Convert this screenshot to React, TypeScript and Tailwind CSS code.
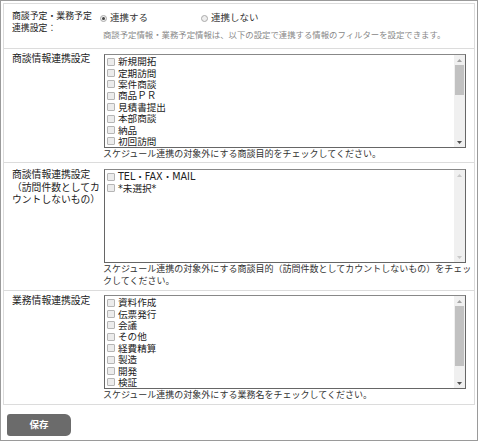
import React from 'react';

const jp = { fontFamily: '"DejaVu Sans", "Noto Sans CJK JP", sans-serif' };

interface ListBoxProps {
  items: string[];
  thumb?: { top: number; height: number };
}

const Check = () => (
  <span className="inline-block w-[8px] h-[8px] mr-[3px] rounded-[1px] border border-[#b5b5b5] bg-[#ececec] shrink-0" />
);

// multi-select checkbox list with a classic scrollbar
const ListBox: React.FC<ListBoxProps> = ({ items, thumb }) => (
  <div className="flex w-[362px] h-[94px] border border-[#666] border-t-[#888] ml-[1px] bg-white">
    <div className="flex-1 overflow-hidden pt-[1px] pl-[2px]">
      {items.map(it => (
        <div key={it} className="flex items-center h-[11.4px] text-[9.6px] text-[#222] leading-[11px] whitespace-nowrap">
          <Check />
          <span>{it}</span>
        </div>
      ))}
    </div>
    <div className="relative w-[11px] h-full bg-[#f0f0f0]">
      <div className="h-[10px] flex items-center justify-center">
        <svg width="5" height="3" viewBox="0 0 5 3"><path d="M0 3 L2.5 0 L5 3 Z" fill={thumb ? '#a3a3a3' : '#c8c8c8'} /></svg>
      </div>
      {thumb && (
        <div className="absolute left-[1px] right-[1px] bg-[#c1c1c1]" style={{ top: thumb.top, height: thumb.height }} />
      )}
      <div className="absolute bottom-0 left-0 right-0 h-[10px] flex items-center justify-center">
        <svg width="5" height="3" viewBox="0 0 5 3"><path d="M0 0 L2.5 3 L5 0 Z" fill={thumb ? '#505050' : '#c8c8c8'} /></svg>
      </div>
    </div>
  </div>
);

interface RowProps {
  label: React.ReactNode;
  children: React.ReactNode;
  last?: boolean;
  pad?: string;
}

const Row: React.FC<RowProps> = ({ label, children, last, pad = 'pt-[5px] pb-[2px]' }) => (
  <div className={`flex ${last ? '' : 'border-b border-[#dcdcdc]'}`}>
    <div className="w-[99px] shrink-0 pl-[8px] pt-[4px] text-[9.8px] leading-[12.5px] text-[#222]">{label}</div>
    <div className={`flex-1 ${pad}`}>{children}</div>
  </div>
);

const Help: React.FC<{ children: React.ReactNode }> = ({ children }) => (
  <div className="text-[9px] leading-[12px] text-[#333] pr-[2px]">{children}</div>
);

export default function App() {
  return (
    <div className="w-[478px] h-[441px] border border-[#9a9a9a] bg-white p-[2px]" style={jp}>
      <div className="border border-[#dcdcdc]">
        <Row
          label={<div className="pt-[2px] text-[8.9px] leading-[12px]">商談予定・業務予定<br />連携設定：</div>}
          pad="pt-[4px] pb-[1px]"
        >
          <div className="flex items-center h-[21px] text-[9.5px] text-[#333] -ml-[3px]">
            <span className="flex items-center w-[101px]">
              <span className="w-[7px] h-[7px] rounded-full border border-[#aaa] bg-[#eee] flex items-center justify-center mr-[3px]">
                <span className="w-[3px] h-[3px] rounded-full bg-[#444]" />
              </span>
              連携する
            </span>
            <span className="flex items-center">
              <span className="w-[7px] h-[7px] rounded-full border border-[#aaa] bg-[#eee] mr-[3px]" />
              連携しない
            </span>
          </div>
          <div className="text-[8.4px] leading-[12px] text-[#888] pb-[6px]">
            商談予定情報・業務予定情報は、以下の設定で連携する情報のフィルターを設定できます。
          </div>
        </Row>
        <Row label="商談情報連携設定">
          <ListBox
            items={['新規開拓', '定期訪問', '案件商談', '商品ＰＲ', '見積書提出', '本部商談', '納品', '初回訪問']}
            thumb={{ top: 10, height: 30 }}
          />
          <Help>スケジュール連携の対象外にする商談目的をチェックしてください。</Help>
        </Row>
        <Row
          label={<div className="pt-[2px]">商談情報連携設定<br />（訪問件数としてカ<br />ウントしないもの）</div>}
          pad="pt-[6px] pb-[3px]"
        >
          <ListBox items={['TEL・FAX・MAIL', '*未選択*']} />
          <Help>スケジュール連携の対象外にする商談目的（訪問件数としてカウントしないもの）をチェックしてください。</Help>
        </Row>
        <Row label="業務情報連携設定" last pad="pt-[4px] pb-[3px]">
          <ListBox
            items={['資料作成', '伝票発行', '会議', 'その他', '経費精算', '製造', '開発', '検証']}
            thumb={{ top: 10, height: 60 }}
          />
          <Help>スケジュール連携の対象外にする業務名をチェックしてください。</Help>
        </Row>
      </div>
      <div className="pt-[6px] pl-[4px]">
        <button className="w-[64px] h-[22px] bg-[#6b6b6b] text-white text-[9.5px] font-bold rounded-[3px] rounded-tr-[6px] rounded-br-[5px]">
          保存
        </button>
      </div>
    </div>
  );
}
